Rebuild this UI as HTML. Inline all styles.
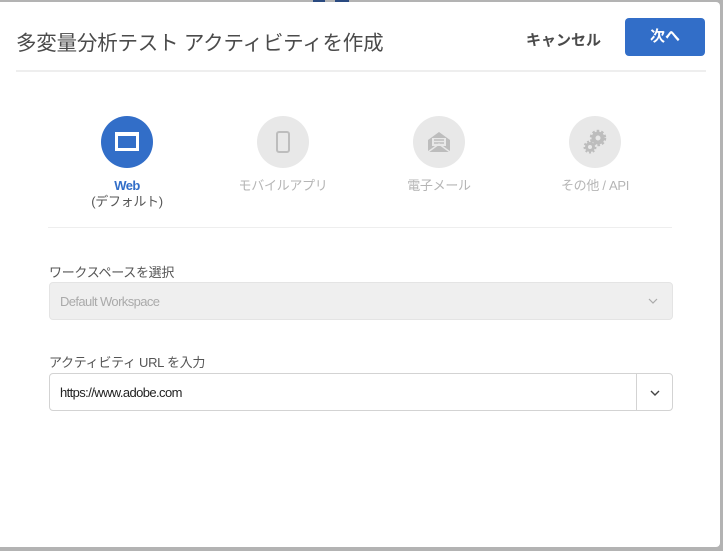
<!DOCTYPE html>
<html><head><meta charset="utf-8"><style>
*{margin:0;padding:0;box-sizing:border-box}
body{width:723px;height:551px;background:#b3b3b3;position:relative;overflow:hidden;font-family:"Liberation Sans","Noto Sans CJK JP",sans-serif}
.dlg{position:absolute;left:0;top:2px;width:720px;height:545px;background:#fff;border-radius:0 4px 4px 0}
.abs{position:absolute}
.title{left:16px;top:24px;font-size:20.5px;color:#4b4b4b;letter-spacing:-0.2px}
.cancel{left:526px;top:27px;font-size:15px;font-weight:bold;color:#4b4b4b}
.next{left:625px;top:16px;width:80px;height:38px;background:#326ec8;border-radius:4px;color:#fff;font-weight:bold;font-size:15px;text-align:center;line-height:38px}
.hr{height:2px;background:#eeeeee}
.c{width:52px;height:52px;border-radius:50%;background:#e8e8e8;top:114px}
.lbl{top:175px;width:160px;text-align:center;font-size:13px;color:#b5b5b5;line-height:17px;letter-spacing:-0.3px}
.fl{font-size:13px;color:#555;letter-spacing:-0.3px}
.lat{letter-spacing:-0.6px}
</style></head><body>
<div class="abs" style="left:313px;top:0;width:12px;height:2px;background:#2a4a80"></div>
<div class="abs" style="left:335px;top:0;width:14px;height:2px;background:#2a4a80"></div>
<div class="dlg">
<div class="abs title">多変量分析テスト アクティビティを作成</div>
<div class="abs cancel">キャンセル</div>
<div class="abs next">次へ</div>
<div class="abs hr" style="left:16px;top:68px;width:690px"></div>

<div class="abs c" style="left:101px;background:#326ec8"><div class="abs" style="left:14px;top:16px;width:24px;height:19px;border:3px solid #fff;border-top-width:4px"></div></div>
<div class="abs c" style="left:257px"><div class="abs" style="left:19px;top:15px;width:14px;height:22px;border:2px solid #bdbdbd;border-radius:3px"></div></div>
<div class="abs c" style="left:413px"><svg class="abs" style="left:13px;top:13px" width="26" height="26" viewBox="0 0 26 26"><path d="M2 11 L13 3 L24 11 V23 H2 Z" fill="#bdbdbd"/><rect x="6" y="9" width="14" height="8" fill="#e8e8e8"/><path d="M8 11h10M8 14h10" stroke="#bdbdbd" stroke-width="1.5"/><path d="M2 23 L13 15 L24 23" stroke="#e8e8e8" stroke-width="1.5" fill="none"/></svg></div>
<div class="abs c" style="left:569px"><svg class="abs" style="left:13px;top:13px" width="26" height="26" viewBox="0 0 26 26"><circle cx="16" cy="9" r="4.5" fill="none" stroke="#bdbdbd" stroke-width="4"/><circle cx="16" cy="9" r="7" fill="none" stroke="#bdbdbd" stroke-width="2.5" stroke-dasharray="2.5 2"/><circle cx="8" cy="18" r="3.5" fill="none" stroke="#bdbdbd" stroke-width="3"/><circle cx="8" cy="18" r="5.5" fill="none" stroke="#bdbdbd" stroke-width="2" stroke-dasharray="2 1.8"/></svg></div>

<div class="abs lbl lat" style="left:47px;color:#326ec8;font-weight:bold">Web</div>
<div class="abs lbl" style="left:47px;top:191px;color:#555">(デフォルト)</div>
<div class="abs lbl" style="left:203px">モバイルアプリ</div>
<div class="abs lbl" style="left:359px">電子メール</div>
<div class="abs lbl" style="left:515px">その他 / API</div>

<div class="abs hr" style="left:48px;top:225px;width:624px;height:1px"></div>

<div class="abs fl" style="left:49px;top:260px">ワークスペースを選択</div>
<div class="abs" style="left:49px;top:280px;width:624px;height:38px;background:#efefef;border:1px solid #e4e4e4;border-radius:4px">
<div class="abs lat" style="left:10px;top:11px;font-size:13px;color:#aaa">Default Workspace</div>
<svg class="abs" style="left:598px;top:15px" width="10" height="6"><path d="M1 1l4 4 4-4" stroke="#aaa" fill="none" stroke-width="1.2"/></svg></div>

<div class="abs fl" style="left:49px;top:350px">アクティビティ URL を入力</div>
<div class="abs" style="left:49px;top:371px;width:624px;height:38px;background:#fff;border:1px solid #d3d3d3;border-radius:4px">
<div class="abs lat" style="left:10px;top:11px;font-size:13px;color:#222">https://www.adobe.com</div>
<div class="abs" style="left:586px;top:0;width:1px;height:36px;background:#d3d3d3"></div>
<svg class="abs" style="left:600px;top:16px" width="10" height="6"><path d="M1 1l4 4 4-4" stroke="#444" fill="none" stroke-width="1.4"/></svg></div>
</div>
</body></html>
